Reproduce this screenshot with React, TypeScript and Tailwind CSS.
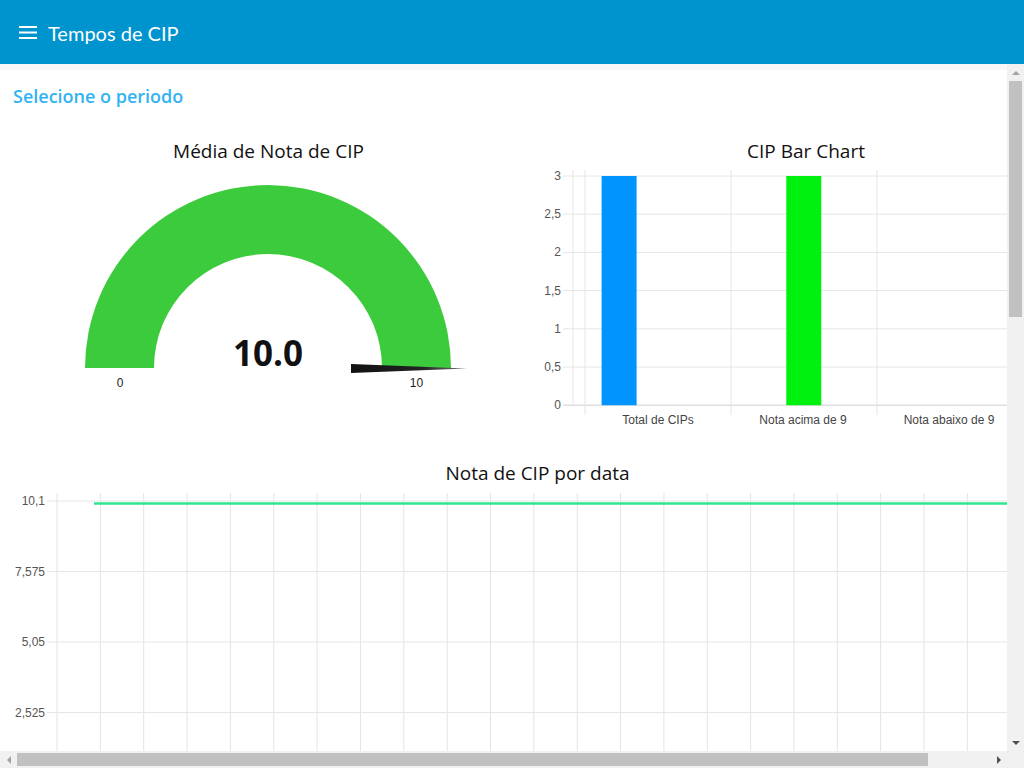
import React from "react";

const barGridY = [13, 51.2, 89.4, 127.6, 165.8, 204, 242.2];
const barTicks = ["3", "2,5", "2", "1,5", "1", "0,5", "0"];
const barCats = [
  { label: "Total de CIPs", x: 121 },
  { label: "Nota acima de 9", x: 266 },
  { label: "Nota abaixo de 9", x: 412 },
];

const lineGridY = [16, 86.5, 157, 227.5];
const lineTicks = ["10,1", "7,575", "5,05", "2,525"];
const lineGridX = Array.from({ length: 24 }, (_, k) => 57 + k * 43.35);

const chartFont = "'Liberation Sans', Arial, sans-serif";

function Gauge() {
  return (
    <div className="flex flex-col items-center">
      <h3 className="h-6 text-[19px] leading-6 font-medium text-[#111] font-['Open_Sans',sans-serif]">Média de Nota de CIP</h3>
      <svg width="537" height="298" className="block">
        <defs>
          <linearGradient id="needle" x1="0" x2="1" y1="0" y2="0">
            <stop offset="0" stopColor="#111" />
            <stop offset="0.6" stopColor="#222" />
            <stop offset="1" stopColor="#777" />
          </linearGradient>
        </defs>
        <path d="M 85 205 A 183 183 0 0 1 451 205 L 382 205 A 114 114 0 0 0 154 205 Z" fill="#3ccb3c" />
        <polygon points="351,201 351,210 467,205.5" fill="url(#needle)" />
        <text x="268" y="203" textAnchor="middle" fontFamily="'Open Sans', sans-serif" fontWeight="700" fontSize="35" fill="#111">
          10.0
        </text>
        <text x="120" y="224" textAnchor="middle" fontFamily={chartFont} fontSize="12" fill="#222">0</text>
        <text x="416.5" y="224" textAnchor="middle" fontFamily={chartFont} fontSize="12" fill="#222">10</text>
      </svg>
    </div>
  );
}

function BarChart() {
  return (
    <div className="flex flex-col items-center">
      <h3 className="h-6 text-[19px] leading-6 font-medium text-[#111] font-['Open_Sans',sans-serif]">CIP Bar Chart</h3>
      <svg width="538" height="298" className="block">
        {barGridY.map((y, i) => (
          <g key={y}>
            <line x1="26" x2="538" y1={y} y2={y} stroke={i === barGridY.length - 1 ? "#cfcfcf" : "#e6e6e6"} />
            <text x="24" y={y + 4} textAnchor="end" fontFamily={chartFont} fontSize="12" fill="#555">
              {barTicks[i]}
            </text>
          </g>
        ))}
        <line x1="36" x2="36" y1="7" y2="242" stroke="#e6e6e6" />
        {[48, 194, 340, 486].map((x) => (
          <line key={x} x1={x} x2={x} y1="7" y2="252" stroke="#e6e6e6" />
        ))}
        <rect x="64.6" y="13" width="35" height="229.2" fill="#0094ff" />
        <rect x="249.3" y="13" width="35" height="229.2" fill="#00f10e" />
        {barCats.map((c) => (
          <text key={c.label} x={c.x} y="261" textAnchor="middle" fontFamily={chartFont} fontSize="12" fill="#444">
            {c.label}
          </text>
        ))}
      </svg>
    </div>
  );
}

function LineChart() {
  return (
    <div className="flex flex-col items-center">
      <h3 className="h-6 text-[19px] leading-6 font-medium text-[#111] font-['Open_Sans',sans-serif]">Nota de CIP por data</h3>
      <svg width="1075" height="266" className="block">
        {lineGridX.map((x) => (
          <line key={x} x1={x} x2={x} y1="8" y2="266" stroke="#e4e4e4" />
        ))}
        {lineGridY.map((y, i) => (
          <g key={y}>
            <line x1="47" x2="1075" y1={y} y2={y} stroke="#e6e6e6" />
            <text x="45" y={y + 4} textAnchor="end" fontFamily={chartFont} fontSize="12" fill="#555">
              {lineTicks[i]}
            </text>
          </g>
        ))}
        <line x1="94" x2="1075" y1="18.5" y2="18.5" stroke="#2fe68e" strokeWidth="2.5" />
      </svg>
    </div>
  );
}

function Arrow({ dir, dark }: { dir: "up" | "down" | "left" | "right"; dark?: boolean }) {
  const pts = {
    up: "5,1 9,5 1,5",
    down: "1,1 9,1 5,5",
    left: "5,1 5,9 1,5",
    right: "1,1 1,9 5,5",
  }[dir];
  const vertical = dir === "up" || dir === "down";
  return (
    <div className="w-[17px] h-[17px] flex items-center justify-center shrink-0">
      <svg width={vertical ? 10 : 6} height={vertical ? 6 : 10}>
        <polygon points={pts} fill={dark ? "#505050" : "#a3a3a3"} />
      </svg>
    </div>
  );
}

export default function App() {
  return (
    <div className="w-[1024px] h-[768px] flex flex-col overflow-hidden bg-white font-['Lato',sans-serif]">
      <header className="h-16 shrink-0 bg-[#0094ce] flex items-center pl-[19px] gap-[11px] text-white">
        <svg width="18" height="13" className="shrink-0">
          <rect x="0" y="0" width="18" height="2" fill="#fff" />
          <rect x="0" y="5.5" width="18" height="2" fill="#fff" />
          <rect x="0" y="11" width="18" height="2" fill="#fff" />
        </svg>
        <span className="text-[20px] leading-7 pt-0.5">Tempos de CIP</span>
      </header>

      <div className="flex flex-1 min-h-0">
        <div className="flex-1 overflow-hidden">
          <div className="w-[1075px]">
            <div className="h-[6px] bg-[#f7f7f7]" />
            <h2 className="pt-[14px] pl-[13px] text-[18px] leading-6 font-semibold text-[#31b3f3] font-['Open_Sans',sans-serif]">Selecione o periodo</h2>
            <div className="grid grid-cols-[537px_538px] mt-[31px]">
              <Gauge />
              <BarChart />
            </div>
            <LineChart />
          </div>
        </div>

        <div className="w-[17px] shrink-0 bg-[#f1f1f1] flex flex-col">
          <Arrow dir="up" />
          <div className="flex-1 px-[2px]">
            <div className="h-[236px] bg-[#c1c1c1]" />
          </div>
          <Arrow dir="down" dark />
        </div>
      </div>

      <div className="h-[17px] shrink-0 bg-[#f1f1f1] flex">
        <Arrow dir="left" />
        <div className="flex-1 py-[2px]">
          <div className="w-[911px] h-full bg-[#c1c1c1]" />
        </div>
        <Arrow dir="right" dark />
        <div className="w-[17px] bg-[#f1f1f1]" />
      </div>
    </div>
  );
}
